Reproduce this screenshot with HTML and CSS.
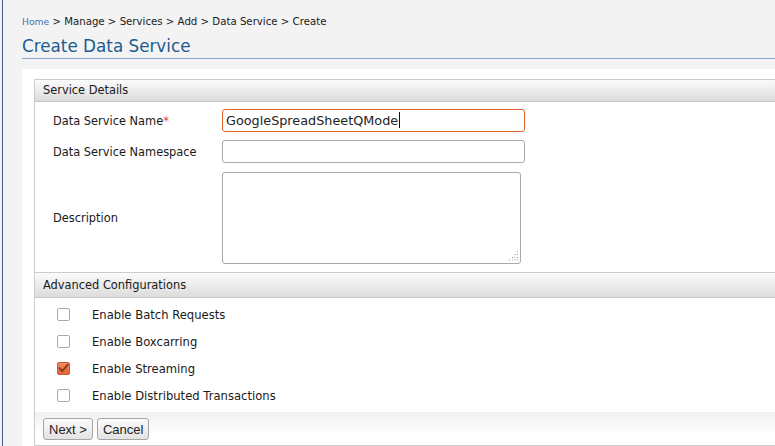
FILE: index.html
```html
<!DOCTYPE html>
<html>
<head>
<meta charset="utf-8">
<link rel="stylesheet" href="styles.css">
</head>
<body>
<div class="frame">
  <div class="crumbs"><a class="home">Home</a> &gt; Manage &gt; Services &gt; Add &gt; Data Service &gt; Create</div>
  <h1 class="title">Create Data Service</h1>
  <div class="content">
    <div class="panel">
      <div class="sec-head">Service Details</div>
      <div class="form-grid">
        <label class="lbl">Data Service Name<span class="req">*</span></label>
        <div class="field focus">GoogleSpreadSheetQMode<span class="caret"></span></div>
        <label class="lbl">Data Service Namespace</label>
        <div class="field"></div>
        <label class="lbl">Description</label>
        <div class="area-wrap">
          <textarea class="area"></textarea>
          <svg class="grip" width="10" height="10" viewBox="0 0 10 10">
            <g fill="#9a9a9a">
              <rect x="8" y="0" width="1" height="1"/>
              <rect x="5.5" y="3" width="1" height="1"/><rect x="8" y="3" width="1" height="1"/>
              <rect x="3" y="6" width="1" height="1"/><rect x="5.5" y="6" width="1" height="1"/><rect x="8" y="6" width="1" height="1"/>
              <rect x="0" y="8.5" width="1" height="1"/><rect x="3" y="8.5" width="1" height="1"/><rect x="5.5" y="8.5" width="1" height="1"/><rect x="8" y="8.5" width="1" height="1"/>
            </g>
          </svg>
        </div>
      </div>
      <div class="sec-head">Advanced Configurations</div>
      <div class="checks">
        <div class="check"><span class="box"></span><span>Enable Batch Requests</span></div>
        <div class="check"><span class="box"></span><span>Enable Boxcarring</span></div>
        <div class="check"><span class="box on"><svg width="13" height="13" viewBox="0 0 13 13"><path d="M2.5 6.2 L5.2 9.2 L10.8 2.6" fill="none" stroke="#8c3417" stroke-width="1.8" stroke-linecap="round" stroke-linejoin="round"/></svg></span><span>Enable Streaming</span></div>
        <div class="check"><span class="box"></span><span>Enable Distributed Transactions</span></div>
      </div>
      <div class="buttons">
        <button class="btn">Next &gt;</button>
        <button class="btn">Cancel</button>
      </div>
    </div>
  </div>
</div>
</body>
</html>
```

FILE: styles.css
```css
html, body {
  margin: 0;
  padding: 0;
  height: 100%;
  overflow: hidden;
  background: #f3f3f3;
  font-family: "DejaVu Sans", Verdana, sans-serif;
  color: #1a1a1a;
}
.frame {
  margin-left: 2px;
  border-left: 1px solid #3f5f8c;
  padding: 15px 0 0 19px;
  height: 100%;
  box-sizing: border-box;
  display: flex;
  flex-direction: column;
}
.crumbs {
  font-size: 10.2px;
  line-height: 14px;
  color: #1a1a1a;
  white-space: nowrap;
}
.home {
  color: #3b73ad;
  font-size: 9.2px;
}
.title {
  margin: 6px 0 10px 0;
  font-size: 16.8px;
  line-height: 22px;
  font-weight: normal;
  color: #1d5c90;
  padding-bottom: 1px;
  border-bottom: 1px solid #8aa6cf;
}
.content {
  flex: 1;
  background: #fff;
  padding: 10px 0 0 12px;
}
.panel {
  width: 760px;
  border: 1px solid #cccccc;
  border-right: none;
}
.sec-head {
  height: 21px;
  line-height: 21px;
  padding-left: 8px;
  font-size: 11.4px;
  color: #1a1a1a;
  background: linear-gradient(#fbfbfb, #dcdcdc);
  border-bottom: 1px solid #c6c6c6;
}
.form-grid + .sec-head {
  border-top: 1px solid #cccccc;
  height: 24px;
  line-height: 24px;
}
.form-grid {
  display: grid;
  grid-template-columns: 169px auto;
  row-gap: 8px;
  align-items: center;
  padding: 7px 0 8px 18px;
}
.lbl {
  font-size: 11.4px;
}
.req {
  color: #e0532a;
}
.field {
  height: 21px;
  border: 1px solid #aaa8a4;
  border-radius: 3px;
  font-size: 12.8px;
  line-height: 21px;
  padding-left: 3px;
  box-sizing: content-box;
  width: 298px;
  color: #222;
  white-space: nowrap;
}
.field.focus {
  border-color: #e0602e;
}
.caret {
  display: inline-block;
  width: 1px;
  height: 16px;
  background: #111;
  vertical-align: -3px;
  margin-left: 1px;
}
.area-wrap {
  position: relative;
  width: 299px;
  height: 92px;
  margin-top: 1px;
}
.area {
  display: block;
  width: 299px;
  height: 92px;
  box-sizing: border-box;
  border: 1px solid #aaa8a4;
  border-radius: 3px;
  margin: 0;
  padding: 2px;
  resize: none;
  font-family: "DejaVu Sans", sans-serif;
}
.grip {
  position: absolute;
  right: 2px;
  bottom: 3px;
}
.checks {
  padding: 3px 0 3px 22px;
}
.check {
  height: 27px;
  display: flex;
  align-items: center;
  gap: 22px;
  font-size: 11.6px;
}
.box {
  width: 11px;
  height: 11px;
  border: 1px solid #a9a9a9;
  border-radius: 2px;
  background: #fff;
  flex: none;
  position: relative;
}
.box.on {
  background: linear-gradient(#f08a60, #e2653a);
  border-color: #c9582f;
}
.box.on svg {
  position: absolute;
  left: -1px;
  top: -1px;
}
.buttons {
  display: flex;
  gap: 4px;
  padding: 6px 0 5px 8px;
  background: linear-gradient(#f1f1f1, #ffffff 70%);
}
.btn {
  font-family: "Liberation Sans", Arial, sans-serif;
  font-size: 13px;
  color: #222;
  height: 22px;
  padding: 0 5px;
  border: 1px solid #a5a5a5;
  border-radius: 3px;
  background: linear-gradient(#fbfbfb, #e3e3e3);
}
```
